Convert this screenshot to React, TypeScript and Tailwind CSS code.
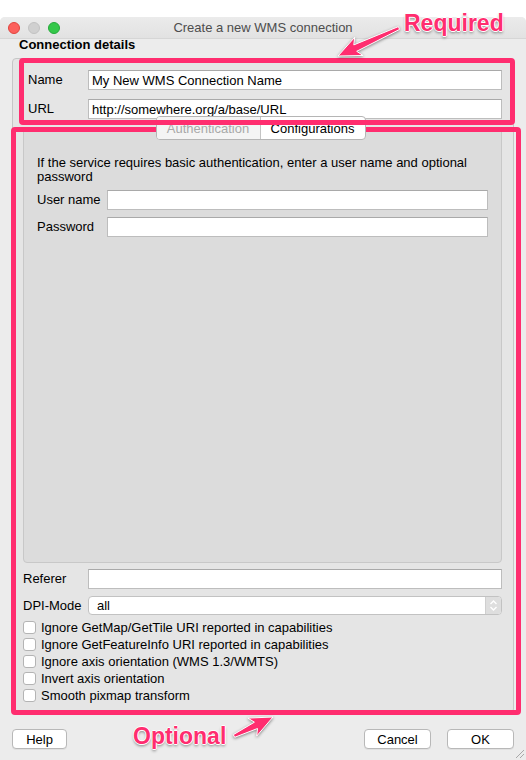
import type { ReactNode } from 'react';

const PINK = '#ff2d6f';

// Skitch-style arrow: thin tail, thicker shaft, swept head
function arrow(tx: number, ty: number, hx: number, hy: number) {
  const dx = hx - tx;
  const dy = hy - ty;
  const len = Math.hypot(dx, dy);
  const ux = dx / len;
  const uy = dy / len;
  const nx = -uy;
  const ny = ux;
  const headLen = 19;
  const bx = hx - ux * headLen;
  const by = hy - uy * headLen;
  const wx = bx - ux * 4;
  const wy = by - uy * 4;
  const pts = [
    [tx + nx * 1.5, ty + ny * 1.5],
    [bx + nx * 3.5, by + ny * 3.5],
    [wx + nx * 10, wy + ny * 10],
    [hx, hy],
    [wx - nx * 10, wy - ny * 10],
    [bx - nx * 3.5, by - ny * 3.5],
    [tx - nx * 1.5, ty - ny * 1.5],
  ];
  return pts.map((p) => `${p[0].toFixed(1)},${p[1].toFixed(1)}`).join(' ');
}

function TextInput({ value }: { value?: string }) {
  return (
    <div className="flex-1 h-[20px] bg-white border border-[#bdbdbd] border-t-[#a9a9a9] flex items-center pl-[3px] leading-none">
      {value}
    </div>
  );
}

function Row({ label, labelW, children }: { label: string; labelW: string; children: ReactNode }) {
  return (
    <div className="flex items-center h-[20px]">
      <div className={`${labelW} shrink-0`}>{label}</div>
      {children}
    </div>
  );
}

function Checkbox({ label }: { label: string }) {
  return (
    <div className="flex items-center h-[17px]">
      <div className="w-[13px] h-[13px] bg-white border border-[#b4b4b4] rounded-[3px] mr-[5px]" />
      <span>{label}</span>
    </div>
  );
}

function Button({ label, w }: { label: string; w: string }) {
  return (
    <div className={`${w} h-[20px] bg-white border border-[#b8b8b8] rounded-[4px] flex items-center justify-center leading-none shadow-[0_1px_0_rgba(0,0,0,0.05)]`}>
      {label}
    </div>
  );
}

const checks = [
  'Ignore GetMap/GetTile URI reported in capabilities',
  'Ignore GetFeatureInfo URI reported in capabilities',
  'Ignore axis orientation (WMS 1.3/WMTS)',
  'Invert axis orientation',
  'Smooth pixmap transform',
];

const annot =
  'absolute z-40 font-bold text-[23px] leading-none text-[#ff2d6f] [text-shadow:1px_0_0_#fff,-1px_0_0_#fff,0_1px_0_#fff,0_-1px_0_#fff,0_2px_3px_rgba(0,0,0,0.45)]';

export default function App() {
  return (
    <div className="relative w-[526px] h-[760px] bg-white pt-[17px] overflow-hidden text-[13px] text-black font-['Liberation_Sans',Arial,sans-serif]">
      <div className="h-[743px] bg-[#ececec] rounded-t-[5px] flex flex-col">
        {/* Title bar */}
        <div className="relative h-[22px] shrink-0 flex items-center justify-center bg-gradient-to-b from-[#ebebeb] to-[#e2e2e2] border-b border-[#d6d6d6] rounded-t-[5px] text-[#4d4d4d]">
          <div className="absolute left-[8px] top-[5px] flex gap-[8px]">
            <div className="w-[12px] h-[12px] rounded-full bg-[#fc605c] border border-[#e0443e]" />
            <div className="w-[12px] h-[12px] rounded-full bg-[#d0d0d0] border border-[#c2c2c2]" />
            <div className="w-[12px] h-[12px] rounded-full bg-[#34c84a] border border-[#25a93a]" />
          </div>
          <span>Create a new WMS connection</span>
        </div>

        <div className="h-[19px] shrink-0 pl-[19px] pt-[0px] font-bold leading-[12px]">Connection details</div>

        {/* Group box */}
        <div className="mx-[12px] h-[655px] shrink-0 border border-[#c6c6c6] rounded-[4px] bg-[#e5e5e5] flex flex-col">
          <div className="pt-[11px] pl-[15px] pr-[11px] flex flex-col gap-[9px]">
            <Row label="Name" labelW="w-[60px]">
              <TextInput value="My New WMS Connection Name" />
            </Row>
            <Row label="URL" labelW="w-[60px]">
              <TextInput value="http://somewhere.org/a/base/URL" />
            </Row>
          </div>

          {/* Tab widget */}
          <div className="ml-[10px] mr-[11px] -mt-[3px] flex flex-col">
            <div className="relative z-20 h-[24px] flex justify-center pr-[4px]">
              <div className="flex h-[24px] border border-[#b5b5b5] rounded-[4px] overflow-hidden bg-white leading-none">
                <div className="w-[104px] flex items-center justify-center text-[#a8a8a8] bg-[#f4f4f4] border-r border-[#c4c4c4]">
                  Authentication
                </div>
                <div className="w-[104px] flex items-center justify-center">Configurations</div>
              </div>
            </div>
            <div className="-mt-[12px] h-[435px] bg-[#dcdcdc] border border-[#c8c8c8] rounded-[4px] pt-[27px] px-[13px] flex flex-col">
              <div className="leading-[14px]">
                If the service requires basic authentication, enter a user name and optional
                <br />
                password
              </div>
              <div className="mt-[6px] flex flex-col gap-[7px]">
                <Row label="User name" labelW="w-[70px]">
                  <TextInput />
                </Row>
                <Row label="Password" labelW="w-[70px]">
                  <TextInput />
                </Row>
              </div>
            </div>
          </div>

          <div className="mt-[6px] pl-[10px] pr-[11px]">
            <Row label="Referer" labelW="w-[65px]">
              <TextInput />
            </Row>
          </div>

          <div className="mt-[7px] pl-[10px] pr-[11px] flex items-center h-[19px]">
            <div className="w-[65px] shrink-0">DPI-Mode</div>
            <div className="flex-1 h-[19px] bg-white border border-[#c2c2c2] rounded-[4px] flex items-center overflow-hidden">
              <span className="flex-1 pl-[8px] leading-none">all</span>
              <div className="w-[16px] h-full bg-[#dedede] border-l border-[#cfcfcf] flex items-center justify-center">
                <svg width="9" height="13" viewBox="0 0 9 13" fill="none" stroke="#ffffff" strokeWidth="1.4">
                  <path d="M1.5 5 L4.5 2 L7.5 5" />
                  <path d="M1.5 8 L4.5 11 L7.5 8" />
                </svg>
              </div>
            </div>
          </div>

          <div className="mt-[4px] pl-[10px] flex flex-col">
            {checks.map((c) => (
              <Checkbox key={c} label={c} />
            ))}
          </div>
        </div>

        {/* Buttons */}
        <div className="mt-[16px] pl-[12px] pr-[12px] flex items-center">
          <Button label="Help" w="w-[55px]" />
          <div className="flex-1" />
          <Button label="Cancel" w="w-[67px]" />
          <div className="w-[16px]" />
          <Button label="OK" w="w-[67px]" />
        </div>
      </div>

      {/* resize grip */}
      <svg className="absolute right-[1px] bottom-[1px]" width="11" height="11" viewBox="0 0 11 11" stroke="#a8a8a8" strokeWidth="1">
        <path d="M10 2 L2 10 M10 6 L6 10" />
      </svg>

      {/* annotations */}
      <div className="absolute z-30 left-[19px] top-[58px] w-[496px] h-[67px] border-[5px] border-[#ff2d6f] rounded-[4px]" />
      <div className="absolute z-10 left-[11px] top-[127px] w-[510px] h-[588px] border-[5px] border-[#ff2d6f] rounded-[4px]" />

      <svg className="absolute inset-0 z-40 pointer-events-none [filter:drop-shadow(0_1px_1.5px_rgba(0,0,0,0.45))]" width="526" height="760">
        <polygon points={arrow(399, 28, 338, 56)} fill={PINK} stroke="#fff" strokeWidth="1" strokeLinejoin="round" />
        <polygon points={arrow(234, 736, 273, 717)} fill={PINK} stroke="#fff" strokeWidth="1" strokeLinejoin="round" />
      </svg>
      <span className={`${annot} left-[404px] top-[12px]`}>Required</span>
      <span className={`${annot} left-[133px] top-[725px]`}>Optional</span>
    </div>
  );
}
